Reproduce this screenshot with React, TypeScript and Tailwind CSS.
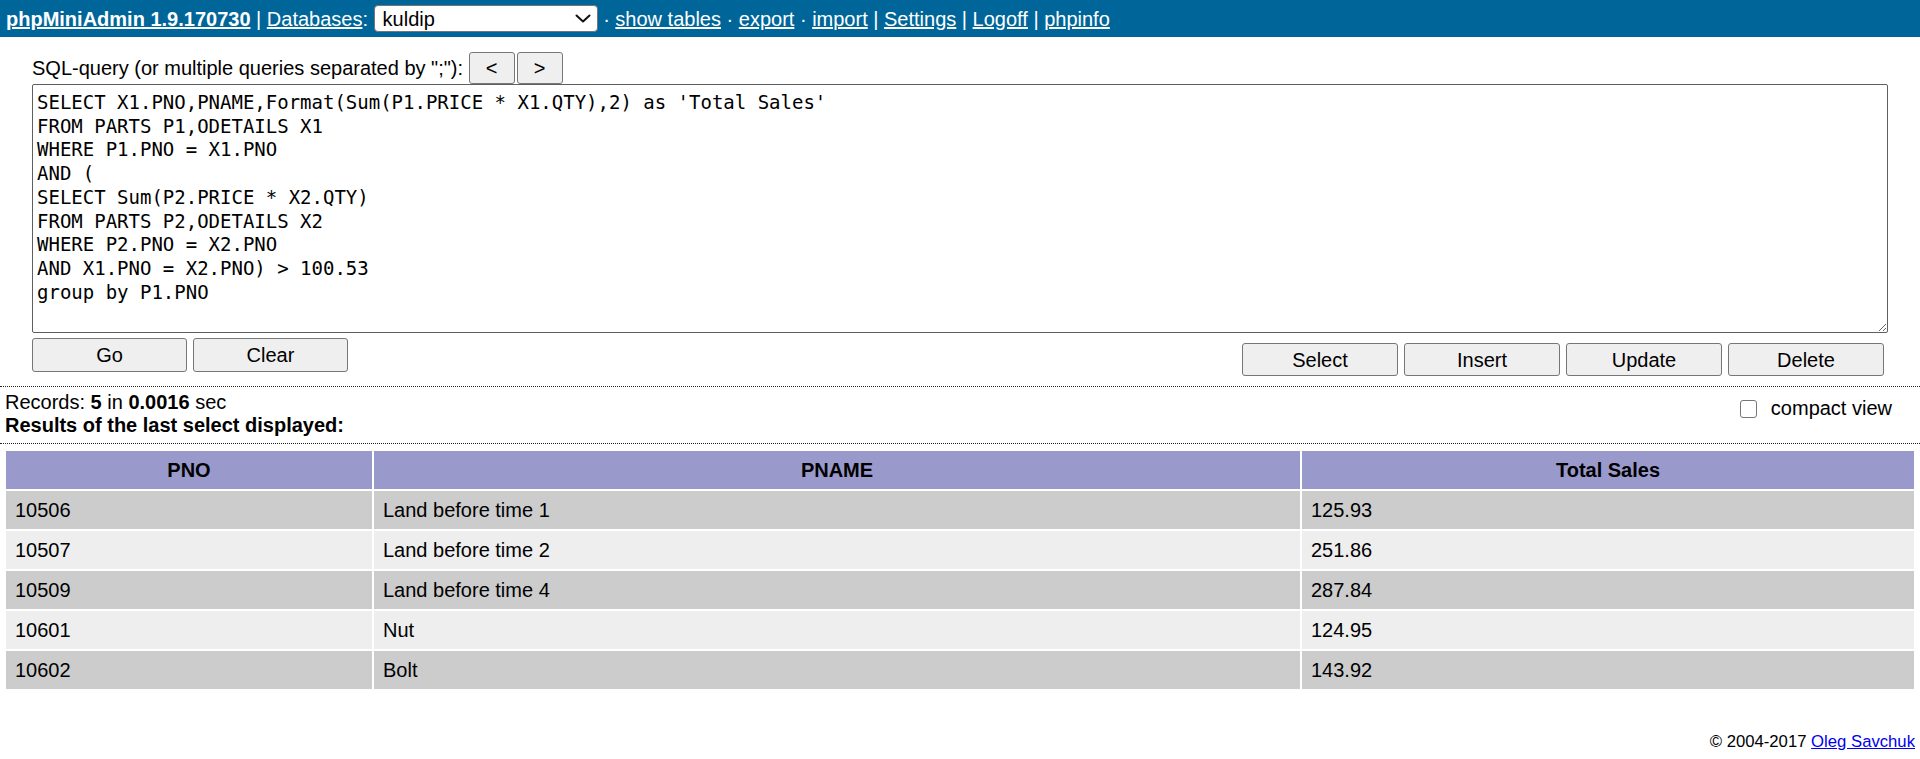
import React from "react";

const sql = `SELECT X1.PNO,PNAME,Format(Sum(P1.PRICE * X1.QTY),2) as 'Total Sales'
FROM PARTS P1,ODETAILS X1
WHERE P1.PNO = X1.PNO
AND (
SELECT Sum(P2.PRICE * X2.QTY)
FROM PARTS P2,ODETAILS X2
WHERE P2.PNO = X2.PNO
AND X1.PNO = X2.PNO) > 100.53
group by P1.PNO`;

const rows = [
  { pno: "10506", pname: "Land before time 1", total: "125.93" },
  { pno: "10507", pname: "Land before time 2", total: "251.86" },
  { pno: "10509", pname: "Land before time 4", total: "287.84" },
  { pno: "10601", pname: "Nut", total: "124.95" },
  { pno: "10602", pname: "Bolt", total: "143.92" },
];

function Btn({ children, className = "" }: { children: React.ReactNode; className?: string }) {
  return (
    <button
      type="button"
      className={
        "flex items-center justify-center bg-[#efefef] border border-[#767676] rounded-[3px] text-black leading-none " +
        className
      }
    >
      {children}
    </button>
  );
}

export default function App() {
  return (
    <div className="min-h-[759px] bg-white text-black text-[20px] font-['Liberation_Sans',Arial,sans-serif]">
      {/* top bar */}
      <div className="h-[37px] bg-[#006699] text-white flex items-center pl-[6px] whitespace-pre">
        <a href="#" className="font-bold underline">phpMiniAdmin 1.9.170730</a>
        <span> | </span>
        <a href="#" className="underline">Databases</a>
        <span>: </span>
        <span className="inline-flex items-center justify-between w-[224px] h-[27px] bg-white border border-[#767676] rounded-[4px] pl-[8px] pr-[6px] text-black">
          <span>kuldip</span>
          <svg width="16" height="9" viewBox="0 0 16 9" fill="none">
            <path d="M1.5 1.5l6.5 6 6.5-6" stroke="#111" strokeWidth="2" strokeLinecap="round" strokeLinejoin="round" />
          </svg>
        </span>
        <span> · </span>
        <a href="#" className="underline">show tables</a>
        <span> · </span>
        <a href="#" className="underline">export</a>
        <span> · </span>
        <a href="#" className="underline">import</a>
        <span> | </span>
        <a href="#" className="underline">Settings</a>
        <span> | </span>
        <a href="#" className="underline">Logoff</a>
        <span> | </span>
        <a href="#" className="underline">phpinfo</a>
      </div>

      {/* query form */}
      <div className="px-[32px]">
        <div className="flex items-center mt-[15px] h-[32px] whitespace-pre">
          <span>SQL-query (or multiple queries separated by ";"): </span>
          <Btn className="w-[46px] h-[32px]">&lt;</Btn>
          <Btn className="w-[46px] h-[32px] ml-[2px]">&gt;</Btn>
        </div>
        <textarea
          defaultValue={sql}
          spellCheck={false}
          className="block w-full h-[249px] border border-[#5f5f5f] rounded-[2px] pl-[4px] pt-[6px] text-[19px] leading-[23.7px] font-['DejaVu_Sans_Mono',monospace] outline-none"
        />
        <div className="flex justify-between items-start mt-[5px]">
          <div className="flex gap-[6px]">
            <Btn className="w-[155px] h-[34px]">Go</Btn>
            <Btn className="w-[155px] h-[34px]">Clear</Btn>
          </div>
          <div className="flex gap-[6px] mt-[5px] mr-[4px]">
            <Btn className="w-[156px] h-[33px]">Select</Btn>
            <Btn className="w-[156px] h-[33px]">Insert</Btn>
            <Btn className="w-[156px] h-[33px]">Update</Btn>
            <Btn className="w-[156px] h-[33px]">Delete</Btn>
          </div>
        </div>
      </div>

      {/* records info */}
      <div className="mt-[10px] border-t border-dotted border-[#222]" />
      <div className="flex justify-between items-start px-[5px] pt-[4px] pb-[6px] leading-[23px]">
        <div>
          <div>
            Records: <b>5</b> in <b>0.0016</b> sec
          </div>
          <div className="font-bold">Results of the last select displayed:</div>
        </div>
        <label className="flex items-center gap-[14px] mt-[6px] mr-[23px]">
          <span className="block w-[17px] h-[18px] border-[1.5px] border-[#767676] rounded-[3px] bg-white" />
          <span>compact view</span>
        </label>
      </div>
      <div className="border-t border-dotted border-[#222]" />

      {/* results */}
      <div className="px-[4px] pt-[5px]">
        <table className="w-full border-separate border-spacing-[2px]">
          <thead>
            <tr className="bg-[#9999cc]">
              <th className="w-[366px] h-[38px] font-bold text-center">PNO</th>
              <th className="w-[926px] h-[38px] font-bold text-center">PNAME</th>
              <th className="h-[38px] font-bold text-center">Total Sales</th>
            </tr>
          </thead>
          <tbody>
            {rows.map((r, i) => (
              <tr key={r.pno} className={i % 2 === 0 ? "bg-[#cccccc]" : "bg-[#eeeeee]"}>
                <td className="h-[38px] pl-[9px] text-left">{r.pno}</td>
                <td className="h-[38px] pl-[9px] text-left">{r.pname}</td>
                <td className="h-[38px] pl-[9px] text-left">{r.total}</td>
              </tr>
            ))}
          </tbody>
        </table>
      </div>

      <div className="mt-[41px] pr-[5px] text-right text-[16.7px] leading-[19px]">
        © 2004-2017{" "}
        <a href="#" className="text-[#0000ee] underline">
          Oleg Savchuk
        </a>
      </div>
    </div>
  );
}
